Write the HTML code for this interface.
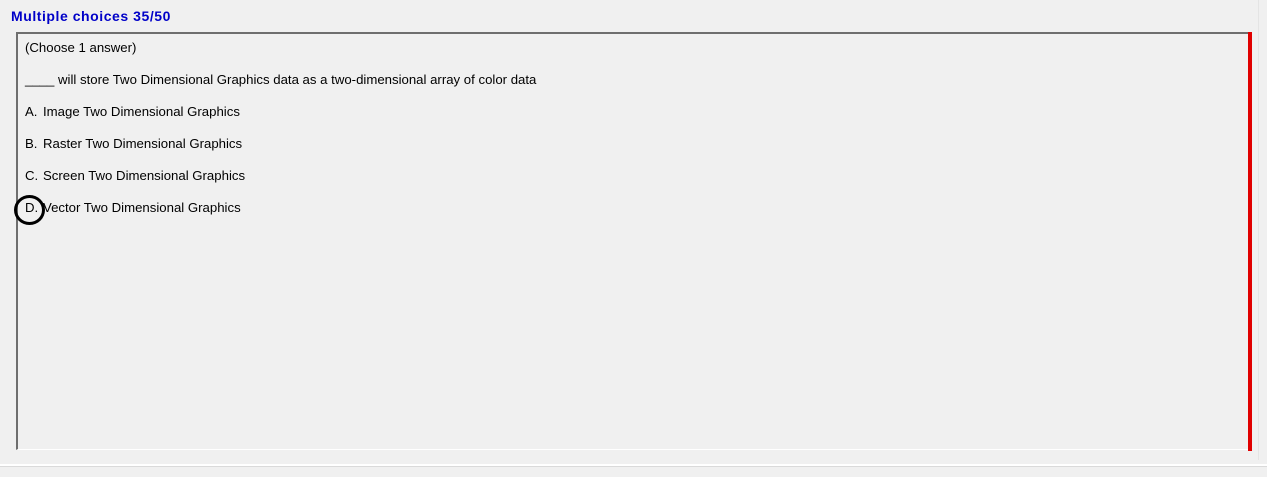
<!DOCTYPE html>
<html><head><style>
body{margin:0;width:1267px;height:477px;background:#f0f0f0;position:relative;overflow:hidden;font-family:"Liberation Sans",sans-serif;}
.t{position:absolute;left:11px;top:8px;font-size:14px;letter-spacing:0.55px;font-weight:bold;color:#0000c8;}
.box{position:absolute;left:16px;top:32px;width:1232px;height:418px;border-top:2px solid #6e6e6e;border-left:2px solid #6e6e6e;border-bottom:1px solid #fff;box-sizing:border-box;}
.red{position:absolute;left:1248px;top:32px;width:4px;height:419px;background:#e00000;}
.vl{position:absolute;left:1258px;top:0;width:1px;height:460px;background:#e4e4e4;}
.hl{position:absolute;left:0;top:464px;width:1267px;height:2px;background:#fff;}
.hl2{position:absolute;left:0;top:466px;width:1267px;height:1px;background:#dadada;}
.l{position:absolute;left:25px;font-size:13.2px;color:#000;white-space:pre;}
.l b{font-weight:normal;display:inline-block;width:18px;}
.c{position:absolute;left:14px;top:195px;width:31px;height:30px;border:3px solid #000;border-radius:50%;box-sizing:border-box;}
</style></head><body>
<div class="t">Multiple choices 35/50</div>
<div class="vl"></div>
<div class="box"></div>
<div class="red"></div>
<div class="hl"></div><div class="hl2"></div>
<div class="l" style="top:40px">(Choose 1 answer)</div>
<div class="l" style="top:72px">____ will store Two Dimensional Graphics data as a two-dimensional array of color data</div>
<div class="l" style="top:104px"><b>A.</b>Image Two Dimensional Graphics</div>
<div class="l" style="top:136px"><b>B.</b>Raster Two Dimensional Graphics</div>
<div class="l" style="top:168px"><b>C.</b>Screen Two Dimensional Graphics</div>
<div class="l" style="top:200px"><b>D.</b>Vector Two Dimensional Graphics</div>
<div class="c"></div>
</body></html>
